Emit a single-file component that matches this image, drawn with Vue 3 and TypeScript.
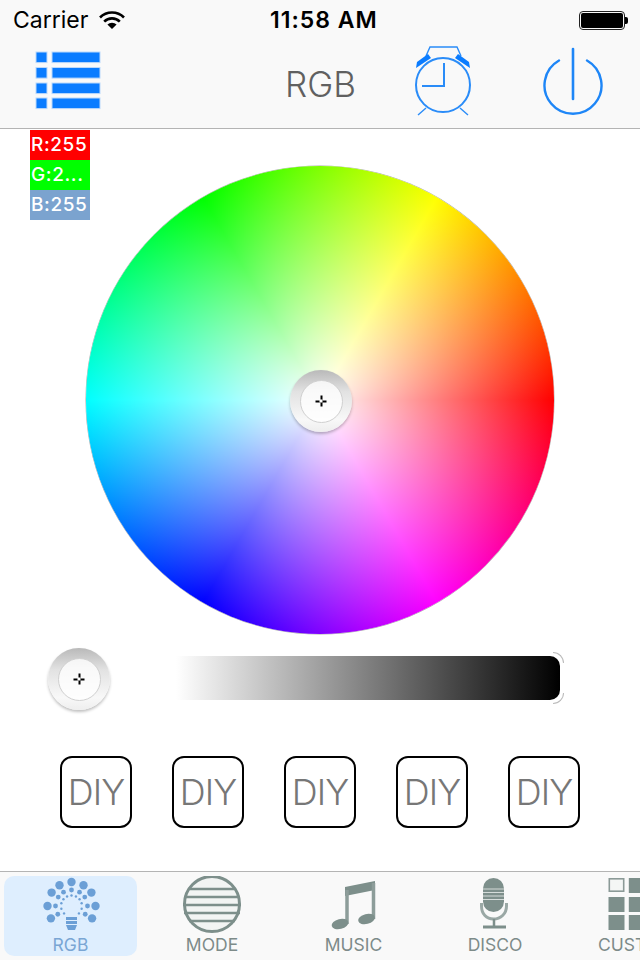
<template>
  <div class="screen">
    <header class="top">
      <div class="status">
        <span class="carrier">Carrier</span>
        <svg class="wifi" viewBox="0 0 26 20" aria-hidden="true">
          <path d="M1 7.500a17 17 0 0 1 24 0" fill="none" stroke="#000" stroke-width="2.600" />
          <path d="M5.200 11.600a11 11 0 0 1 15.600 0" fill="none" stroke="#000" stroke-width="2.600" />
          <path d="M8.400 14.600 13 19l4.600-4.400a6.400 6.400 0 0 0-9.200 0z" fill="#000" />
        </svg>
        <span class="time">11:58 AM</span>
        <div class="battery"><div class="battery-fill"></div></div>
      </div>
      <div class="nav">
        <svg class="ico-list" viewBox="0 0 66 60" aria-hidden="true">
          <g v-for="y in listRows" :key="y">
            <rect x="1" :y="y" width="11" height="10.600" fill="#0a7cff" stroke="#bcd9fb" stroke-width="1" />
            <rect x="17" :y="y" width="48" height="10.600" fill="#0a7cff" stroke="#bcd9fb" stroke-width="1" />
          </g>
        </svg>
        <div class="title">RGB</div>
        <svg class="ico-alarm" viewBox="0 0 56 72" aria-hidden="true">
          <g fill="none" stroke="#2a8cf8" stroke-width="2">
            <circle cx="28" cy="40" r="27" />
            <path d="M29 18v23H7" />
            <path d="M11 63 3 70M45 63l8 7" stroke-width="1.400" />
            <path d="M11 11 15 2h27l4 9" stroke-width="1.400" />
          </g>
          <path d="M1 23 2 17 13 9l3 4zM55 23l-1-6-11-8-3 4z" fill="#0a7cff" />
        </svg>
        <svg class="ico-power" viewBox="0 0 60 70" aria-hidden="true">
          <g fill="none" stroke="#1e86f7" stroke-linecap="round">
            <path d="M16 13.500a28.500 28.500 0 1 0 28 0" stroke-width="2.400" />
            <path d="M30 2v50" stroke-width="2.600" />
          </g>
        </svg>
      </div>
    </header>

    <main class="content">
      <div class="chips">
        <div class="chip chip-r">R:255</div>
        <div class="chip chip-g">G:2...</div>
        <div class="chip chip-b">B:255</div>
      </div>

      <div class="wheel">
        <div class="thumb thumb-wheel"><span class="thumb-inner"><i class="cross"></i></span></div>
      </div>

      <div class="slider-row">
        <div class="thumb"><span class="thumb-inner"><i class="cross"></i></span></div>
        <div class="bar"></div>
      </div>

      <div class="diy-row">
        <button v-for="n in 5" :key="n" type="button" class="diy">DIY</button>
      </div>
    </main>

    <nav class="tabs">
      <div class="tab active">
        <svg class="tab-ico" viewBox="0 0 66 60" aria-hidden="true">
          <circle v-for="(d, i) in bulbDots" :key="i" :cx="d.x" :cy="d.y" :r="d.r" fill="#6b9fd6" />
          <path d="M28 41h11v3H28zM28 45h11v3H28zM28 49h11l-2 5h-7z" fill="#6b9fd6" />
        </svg>
        <span>RGB</span>
      </div>
      <div class="tab">
        <svg class="tab-ico" viewBox="0 0 66 60" aria-hidden="true">
          <circle cx="33" cy="28" r="27.500" fill="#f2f4f3" stroke="#7d8f8b" stroke-width="3" />
          <path d="M10 13h46M5 21h56M4 29h58M5 37h56M10 45h46" stroke="#7d8f8b" stroke-width="2.600" />
        </svg>
        <span>MODE</span>
      </div>
      <div class="tab">
        <svg class="tab-ico" viewBox="0 0 66 60" aria-hidden="true">
          <path d="M24 11 54 5v9l-30 6z" fill="#7d8f8b" />
          <path d="M26 14v34M52.500 7v36" stroke="#8d9d9a" stroke-width="3.500" />
          <ellipse cx="19" cy="48" rx="8.500" ry="5" transform="rotate(-14 19 48)" fill="#7d8f8b" />
          <ellipse cx="45.500" cy="43" rx="8.500" ry="5" transform="rotate(-14 45.500 43)" fill="#7d8f8b" />
        </svg>
        <span>MUSIC</span>
      </div>
      <div class="tab">
        <svg class="tab-ico" viewBox="0 0 66 60" aria-hidden="true">
          <rect x="21" y="2" width="21" height="34" rx="10.500" fill="#7d8f8b" />
          <path d="M21 13h21M21 16.500h21M21 20h21M21 23.500h21" stroke="#d5dcda" stroke-width="1.200" />
          <path d="M19.500 27v3c0 8 5 13 12 13s13-5 13-13v-3" fill="none" stroke="#9aa8a5" stroke-width="3" />
          <path d="M32 43v7" stroke="#7d8f8b" stroke-width="2.500" />
          <path d="M21 51h23" stroke="#7d8f8b" stroke-width="3" />
        </svg>
        <span>DISCO</span>
      </div>
      <div class="tab">
        <svg class="tab-ico" viewBox="0 0 66 60" aria-hidden="true">
          <rect x="5.300" y="2.800" width="14.400" height="12.400" fill="#f4f6f5" stroke="#8b9a97" stroke-width="1.600" />
          <rect v-for="c in gridCells" :key="c.x + '-' + c.y" :x="c.x" :y="c.y" width="16" height="15" fill="#7d8f8b" />
        </svg>
        <span>CUSTOM</span>
      </div>
    </nav>
  </div>
</template>

<script setup lang="ts">
const listRows = [1, 16.5, 32, 47]

// dots of the bulb icon: three rings round the glass
const bulbDots: { x: number; y: number; r: number }[] = []
const cx = 33.5
const cy = 30
for (const a of [0, 30, 56, 90, 121, -30, -56, -90, -121]) {
  const rad = (a * Math.PI) / 180
  bulbDots.push({ x: cx + 24 * Math.sin(rad), y: cy - 24 * Math.cos(rad), r: 4.2 })
  bulbDots.push({ x: cx + 16 * Math.sin(rad), y: cy - 16 * Math.cos(rad), r: 2.4 })
}
for (const a of [-135, -105, -75, -50, -25, 0, 25, 50, 75, 105, 135]) {
  const rad = (a * Math.PI) / 180
  bulbDots.push({ x: cx + 10.5 * Math.sin(rad), y: cy - 10.5 * Math.cos(rad), r: 1.2 })
}

const gridCells = [
  { x: 24.8, y: 2 },
  { x: 4.5, y: 21 },
  { x: 24.8, y: 21 },
  { x: 4.5, y: 39 },
  { x: 24.8, y: 39 }
]
</script>

<style scoped>
.screen {
  position: relative;
  width: 640px;
  height: 960px;
  background: #fff;
  overflow: hidden;
  display: flex;
  flex-direction: column;
  font-family: Inter, "Liberation Sans", sans-serif;
}

.top {
  height: 128px;
  flex-shrink: 0;
  background: #f9f9f9;
  border-bottom: 1px solid #b4b4b4;
}

.status {
  height: 40px;
  display: flex;
  align-items: center;
  color: #000;
  font-size: 23px;
}

.carrier {
  margin-left: 13px;
  width: 76px;
}

.wifi {
  width: 26px;
  height: 20px;
  margin-left: 10px;
}

.time {
  margin-left: 145px;
  width: 108px;
  font-weight: 600;
  letter-spacing: 1px;
  white-space: nowrap;
}

.battery {
  position: relative;
  width: 46px;
  height: 19px;
  margin-left: 201px;
  box-sizing: border-box;
  border: 1px solid #222;
  border-radius: 4px;
  padding: 1px;
}

.battery::after {
  content: '';
  position: absolute;
  right: -4px;
  top: 5px;
  width: 3px;
  height: 7px;
  background: #000;
  border-radius: 0 2px 2px 0;
}

.battery-fill {
  width: 100%;
  height: 100%;
  background: #000;
  border-radius: 2px;
}

.nav {
  height: 88px;
  display: flex;
  align-items: flex-start;
  padding-left: 35px;
}

.ico-list {
  width: 66px;
  height: 60px;
  margin-top: 11px;
}

.title {
  width: 70px;
  margin-left: 184px;
  margin-top: 24px;
  font-size: 35px;
  font-weight: 300;
  line-height: 40px;
  color: #606060;
  text-align: center;
}

.ico-alarm {
  width: 56px;
  height: 72px;
  margin-left: 60px;
  margin-top: 5px;
}

.ico-power {
  width: 60px;
  height: 70px;
  margin-left: 72px;
  margin-top: 7px;
}

.content {
  position: relative;
  flex: 1;
  display: flex;
  flex-direction: column;
  align-items: center;
}

.chips {
  position: absolute;
  left: 30px;
  top: 1px;
  width: 60px;
  z-index: 2;
}

.chip {
  height: 30px;
  line-height: 30px;
  padding-left: 1px;
  font-size: 19px;
  font-weight: 500;
  letter-spacing: 0.6px;
  color: #fff;
  white-space: nowrap;
  overflow: hidden;
}

.chip-r {
  background: #ff0000;
}

.chip-g {
  background: #00ff00;
}

.chip-b {
  background: #7ba3cf;
}

.wheel {
  position: relative;
  width: 468px;
  height: 468px;
  margin-top: 37px;
  border-radius: 50%;
  background:
    radial-gradient(circle closest-side, #fff 0%, rgba(255, 255, 255, 0) 100%),
    conic-gradient(from 90deg, #f00, #f0f, #00f, #0ff, #0f0, #ff0, #f00);
  box-shadow: 0 0 0 0.5px rgba(0, 0, 0, 0.35);
}

.thumb {
  width: 62px;
  height: 62px;
  flex-shrink: 0;
  border-radius: 50%;
  background: linear-gradient(#b9b9b9, #e2e2e2 35%, #f8f8f8 80%, #eee);
  box-shadow: 0 2px 3px rgba(0, 0, 0, 0.25);
  display: flex;
  align-items: center;
  justify-content: center;
}

.thumb-wheel {
  position: absolute;
  left: 204px;
  top: 204px;
}

.thumb-inner {
  position: relative;
  width: 43px;
  height: 43px;
  box-sizing: border-box;
  border-radius: 50%;
  border: 1px solid #d0d0d0;
  background: rgba(255, 255, 255, 0.8);
}

.cross {
  position: absolute;
  left: 50%;
  top: 50%;
  width: 11px;
  height: 11px;
  transform: translate(-50%, -50%);
  background:
    linear-gradient(#fff, #fff) center / 3px 3px no-repeat,
    linear-gradient(#000, #000) center / 11px 2px no-repeat,
    linear-gradient(#000, #000) center / 2px 11px no-repeat;
}

.slider-row {
  width: 544px;
  display: flex;
  align-items: flex-start;
  margin-top: 14px;
  height: 62px;
}

.bar {
  position: relative;
  width: 384px;
  height: 44px;
  margin-left: 66px;
  margin-top: 8px;
  border-radius: 0 10px 10px 0;
  background: linear-gradient(90deg, #fff, #000);
}

.bar::before,
.bar::after {
  content: '';
  position: absolute;
  right: -4px;
  width: 11px;
  height: 11px;
  box-sizing: border-box;
  border-right: 1px solid #bbb;
}

.bar::before {
  top: -4px;
  border-top: 1px solid #bbb;
  border-top-right-radius: 11px;
}

.bar::after {
  bottom: -4px;
  border-bottom: 1px solid #bbb;
  border-bottom-right-radius: 11px;
}

.diy-row {
  display: flex;
  gap: 40px;
  margin-top: 46px;
}

.diy {
  width: 72px;
  height: 72px;
  padding: 0;
  box-sizing: border-box;
  border: 2px solid #000;
  border-radius: 12px;
  background: #fff;
  color: #777;
  font-family: inherit;
  font-size: 36px;
  font-weight: 300;
  letter-spacing: -1px;
  white-space: nowrap;
}

.tabs {
  height: 89px;
  flex-shrink: 0;
  box-sizing: border-box;
  background: #f9f9f9;
  border-top: 1px solid #b4b4b4;
  display: flex;
  gap: 8.5px;
  padding: 4px 0 4px 4px;
  overflow: hidden;
}

.tab {
  width: 133px;
  height: 80px;
  flex-shrink: 0;
  border-radius: 10px;
  display: flex;
  flex-direction: column;
  align-items: center;
  font-size: 17.5px;
  color: #7d8b89;
}

.tab span {
  line-height: 20px;
  margin-top: -1px;
}

.tab.active {
  background: #deeefe;
  color: #7aa6d4;
}

.tab-ico {
  width: 66px;
  height: 60px;
  flex-shrink: 0;
}
</style>

<style>
html,
body {
  margin: 0;
  background: #fff;
}
</style>
